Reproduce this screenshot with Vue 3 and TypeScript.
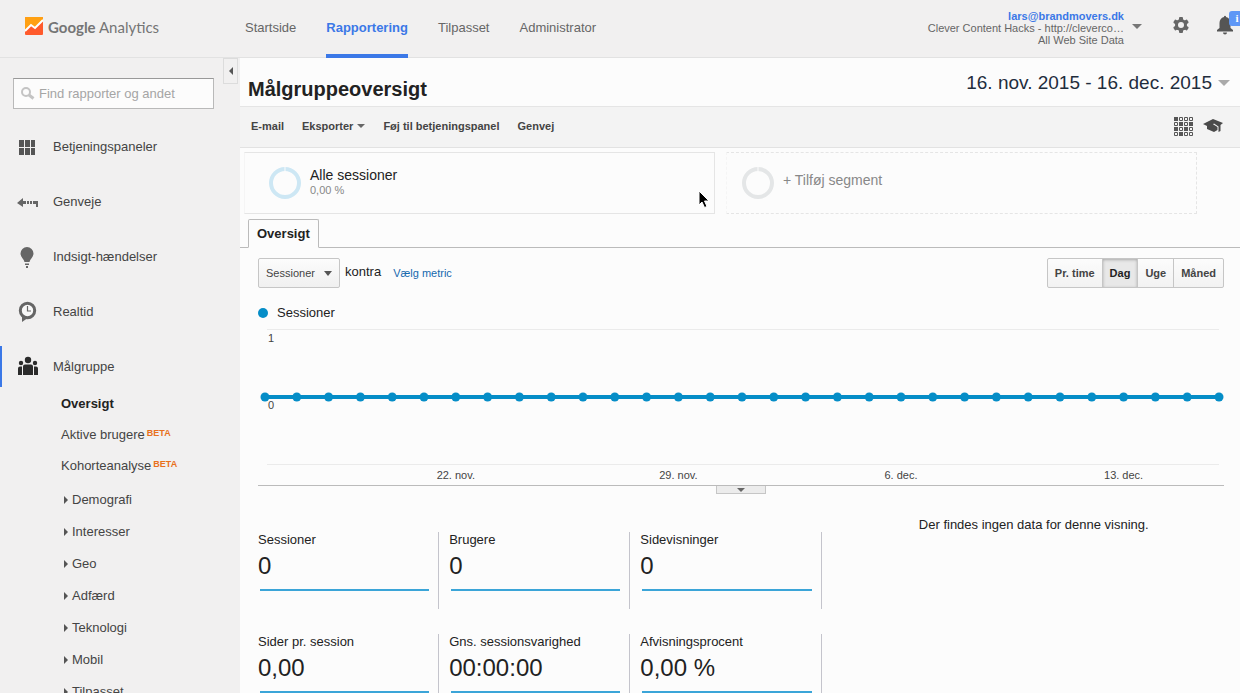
<script setup lang="ts">
import { ref } from 'vue'

interface Metric {
  label: string
  value: string
}

const tabs: string[] = ['Startside', 'Rapportering', 'Tilpasset', 'Administrator']
const activeTab = ref('Rapportering')

const periods: string[] = ['Pr. time', 'Dag', 'Uge', 'Måned']
const period = ref('Dag')

const groups: string[] = ['Demografi', 'Interesser', 'Geo', 'Adfærd', 'Teknologi', 'Mobil', 'Tilpasset']

const metrics: Metric[] = [
  { label: 'Sessioner', value: '0' },
  { label: 'Brugere', value: '0' },
  { label: 'Sidevisninger', value: '0' },
  { label: 'Sider pr. session', value: '0,00' },
  { label: 'Gns. sessionsvarighed', value: '00:00:00' },
  { label: 'Afvisningsprocent', value: '0,00 %' },
]

const days = 30
const points = Array.from({ length: days + 1 }, (_, i) => `${(i / days) * 100}%`)
const dates = [
  { day: 6, text: '22. nov.' },
  { day: 13, text: '29. nov.' },
  { day: 20, text: '6. dec.' },
  { day: 27, text: '13. dec.' },
].map((d) => ({ x: `${(d.day / days) * 100}%`, text: d.text }))

const query = ref('')
const metric = ref('Sessioner')
</script>

<template>
  <div class="page">
    <header class="top">
      <a class="logo" href="#">
        <svg width="18" height="18" viewBox="0 0 18 18" aria-hidden="true">
          <rect width="18" height="18" rx="1" fill="#ff5a2c" />
          <path d="M1 0H17Q18 0 18 1V4L11 11L7 8L0 14V1Q0 0 1 0Z" fill="#ffa012" />
          <path d="M0 14L6 8L10 11L18 3" fill="none" stroke="#fff" stroke-width="2" />
        </svg>
        <span class="brand"><b>Google</b> Analytics</span>
      </a>
      <nav class="tabs">
        <a v-for="t in tabs" :key="t" href="#" :class="{ active: t === activeTab }" @click.prevent="activeTab = t">{{ t }}</a>
      </nav>
      <div class="tools">
        <button class="account" type="button">
          <span class="who">
            <strong>lars@brandmovers.dk</strong>
            <span>Clever Content Hacks - http://cleverco…</span>
            <span>All Web Site Data</span>
          </span>
          <svg width="10" height="6" viewBox="0 0 10 6" aria-hidden="true"><path d="M0 0H10L5 5Z" fill="#777" /></svg>
        </button>
        <button class="icon gear" type="button" aria-label="Indstillinger">
          <svg width="16" height="16" viewBox="0 0 16 16">
            <g fill="#666">
              <rect x="6" y="0" width="4" height="16" rx="1" />
              <rect x="6" y="0" width="4" height="16" rx="1" transform="rotate(60 8 8)" />
              <rect x="6" y="0" width="4" height="16" rx="1" transform="rotate(120 8 8)" />
              <circle cx="8" cy="8" r="6" />
            </g>
            <circle cx="8" cy="8" r="3" fill="#f1f0f0" />
          </svg>
        </button>
        <button class="icon bell" type="button" aria-label="Meddelelser">
          <svg width="18" height="20" viewBox="0 0 18 20">
            <path d="M8 2V1.500Q9 0 10 1.500V2C13 2.800 14.500 5 14.500 8V13L17 15V16.500H1V15L3.500 13V8C3.500 5 5 2.800 8 2ZM7 17.500H11A2 2 0 0 1 7 17.500Z" fill="#555" />
          </svg>
          <span class="badge">i</span>
        </button>
      </div>
    </header>

    <div class="body">
      <aside class="side">
        <button class="collapse" type="button" aria-label="Skjul menu">
          <svg width="4" height="8" viewBox="0 0 4 8"><path d="M4 0V8L0 4Z" fill="#555" /></svg>
        </button>
        <label class="search">
          <svg width="14" height="14" viewBox="0 0 14 14" aria-hidden="true">
            <circle cx="5" cy="5" r="4" fill="none" stroke="#c4c4c4" stroke-width="2" />
            <path d="M8 8L12.500 11.500" stroke="#c4c4c4" stroke-width="3" />
          </svg>
          <input v-model="query" type="text" placeholder="Find rapporter og andet" aria-label="Find rapporter og andet" />
        </label>

        <nav class="menu">
          <a href="#">
            <svg width="22" height="22" viewBox="0 0 22 22">
              <path d="M2 4h5v7H2zM8 4h5v7H8zM14 4h4v7h-4zM2 12h5v7H2zM8 12h5v7H8zM14 12h4v7h-4z" fill="#555" />
            </svg>
            Betjeningspaneler
          </a>
          <a href="#">
            <svg width="22" height="22" viewBox="0 0 22 22">
              <path d="M0 12L6 7V10H9V13H6V16ZM10 10h2v3h-2zM13 10h2v3h-2zM16 10H21V16H19V13H16Z" fill="#666" />
            </svg>
            Genveje
          </a>
          <a href="#">
            <svg width="22" height="22" viewBox="0 0 22 22">
              <path d="M10 1A6.500 6.500 0 0 1 16.500 7.500C16.500 11 13 13 12.500 16H7.500C7 13 3.500 11 3.500 7.500A6.500 6.500 0 0 1 10 1ZM8 17.500H12V19H8ZM9 20h2v2H9z" fill="#666" />
            </svg>
            Indsigt-hændelser
          </a>
          <a href="#">
            <svg width="22" height="22" viewBox="0 0 22 22">
              <circle cx="10.500" cy="9.500" r="7.200" fill="#f8f8f8" stroke="#666" stroke-width="3" />
              <path d="M5 15V21L10 17.500Z" fill="#666" />
              <path d="M10.500 5V10H14" fill="none" stroke="#666" stroke-width="1.200" />
            </svg>
            Realtid
          </a>
          <a href="#" class="current">
            <svg width="22" height="22" viewBox="0 0 22 22">
              <g fill="#2b2b2b">
                <circle cx="11" cy="4" r="3.200" />
                <circle cx="4" cy="7" r="2.200" />
                <circle cx="18" cy="7" r="2.200" />
                <path d="M6 19V10.500Q6 8.500 8 8.500H14Q16 8.500 16 10.500V19ZM1 19V12.500Q1 10.500 3 10.500H5V19ZM17 10.500H19Q21 10.500 21 12.500V19H17Z" />
              </g>
            </svg>
            Målgruppe
          </a>
        </nav>

        <ul class="sub">
          <li><a href="#" class="bold">Oversigt</a></li>
          <li><a href="#">Aktive brugere</a><span class="beta">BETA</span></li>
          <li><a href="#">Kohorteanalyse</a><span class="beta">BETA</span></li>
        </ul>
        <ul class="sub groups">
          <li v-for="g in groups" :key="g">
            <svg width="4" height="8" viewBox="0 0 4 8" aria-hidden="true"><path d="M0 0V8L4 4Z" fill="#555" /></svg>
            <a href="#">{{ g }}</a>
          </li>
        </ul>
      </aside>

      <main class="main">
        <div class="head">
          <h1>Målgruppeoversigt</h1>
          <button class="range" type="button">
            16. nov. 2015 - 16. dec. 2015
            <svg width="12" height="6" viewBox="0 0 12 6" aria-hidden="true"><path d="M0 0H12L6 6Z" fill="#aaa" /></svg>
          </button>
        </div>

        <div class="bar">
          <button type="button">E-mail</button>
          <button type="button">Eksporter <svg width="8" height="4" viewBox="0 0 8 4" aria-hidden="true"><path d="M0 0H8L4 4Z" fill="#666" /></svg></button>
          <button type="button">Føj til betjeningspanel</button>
          <button type="button">Genvej</button>
          <div class="right">
            <button type="button" aria-label="Datatabel">
              <svg width="19" height="19" viewBox="0 0 19 19">
                <path d="M0 0h4v4H0zM5 5h4v4H5zM0 10h4v4H0zM10 10h4v4h-4zM5 15h4v4H5zM15 5h4v4h-4z" fill="#555" />
                <path d="M5.500 .5h3v3h-3zM10.500 .5h3v3h-3zM15.500 .5h3v3h-3zM.5 5.500h3v3h-3zM10.500 5.500h3v3h-3zM5.500 10.500h3v3h-3zM15.500 10.500h3v3h-3zM.5 15.500h3v3h-3zM10.500 15.500h3v3h-3zM15.500 15.500h3v3h-3z" fill="none" stroke="#555" />
              </svg>
            </button>
            <button type="button" aria-label="Hjælp">
              <svg width="21" height="14" viewBox="0 0 21 14">
                <path d="M0 5L10 0L20 4L17.500 6V12L15.500 13V7.500L11 4.500L10 5.200L14.500 8V11L11 13L4 10V7Z" fill="#4a4a4a" />
              </svg>
            </button>
          </div>
        </div>

        <div class="segments">
          <button class="segment" type="button">
            <svg width="32" height="32" viewBox="0 0 32 32" aria-hidden="true"><circle cx="16" cy="16" r="14" fill="none" stroke="#cde7f4" stroke-width="4" /><path d="M16 0V4" stroke="#fcfcfc" /></svg>
            <span><span class="name">Alle sessioner</span><small>0,00 %</small></span>
          </button>
          <button class="segment add" type="button">
            <svg width="32" height="32" viewBox="0 0 32 32" aria-hidden="true"><circle cx="16" cy="16" r="14" fill="none" stroke="#e4e6e7" stroke-width="4" /><path d="M16 0V4" stroke="#fcfcfc" /></svg>
            <span class="name">+ Tilføj segment</span>
          </button>
        </div>

        <div class="views"><button type="button">Oversigt</button></div>

        <section class="report">
          <div class="controls">
            <span class="pick">
              <select v-model="metric" aria-label="Metric">
                <option>Sessioner</option>
                <option>Brugere</option>
              </select>
              <svg width="8" height="5" viewBox="0 0 8 5" aria-hidden="true"><path d="M0 0H8L4 5Z" fill="#555" /></svg>
            </span>
            <span class="versus">kontra</span>
            <a href="#">Vælg metric</a>
            <div class="periods" role="group" aria-label="Periode">
              <button v-for="p in periods" :key="p" type="button" :class="{ on: p === period }" @click="period = p">{{ p }}</button>
            </div>
          </div>

          <div class="legend"><i></i>Sessioner</div>

          <div class="chart">
            <svg width="100%" height="156" role="img" aria-label="Sessioner">
              <line x1="2" x2="100%" y1="1.500" y2="1.500" stroke="#ebebeb" />
              <line x1="2" x2="100%" y1="136.500" y2="136.500" stroke="#ebebeb" />
              <text x="3" y="14">1</text>
              <text x="3" y="81">0</text>
              <line x1="0" x2="100%" y1="69" y2="69" stroke="#058dc7" stroke-width="4" />
              <circle v-for="x in points" :key="x" :cx="x" cy="69" r="4.500" fill="#058dc7" />
              <text v-for="d in dates" :key="d.text" :x="d.x" y="151" text-anchor="middle">{{ d.text }}</text>
            </svg>
          </div>
          <div class="fold">
            <button type="button" aria-label="Vis mere">
              <svg width="8" height="4" viewBox="0 0 8 4"><path d="M0 0H8L4 4Z" fill="#666" /></svg>
            </button>
          </div>

          <div class="summary">
            <div class="metrics">
              <div v-for="m in metrics" :key="m.label" class="metric">
                <span>{{ m.label }}</span>
                <strong>{{ m.value }}</strong>
                <i></i>
              </div>
            </div>
            <p class="empty">Der findes ingen data for denne visning.</p>
          </div>
        </section>
      </main>
    </div>

    <svg class="pointer" width="12" height="19" viewBox="0 0 12 19" aria-hidden="true">
      <path d="M1 1V15L4 12L6.500 17.500L9 16.500L6.500 11H11Z" fill="#000" stroke="#fff" />
    </svg>
  </div>
</template>

<style>
body {
  background: #fcfcfc;
}
</style>

<style scoped>
* {
  box-sizing: border-box;
}
.page {
  position: relative;
  display: flex;
  flex-direction: column;
  height: 100vh;
  overflow: hidden;
  font: 13px/16px "Liberation Sans", Arial, sans-serif;
  color: #222;
}
button {
  padding: 0;
  border: 0;
  background: none;
  font: inherit;
  color: inherit;
  cursor: pointer;
}
a {
  color: inherit;
  text-decoration: none;
}
svg {
  flex: none;
}
.top {
  flex: none;
  display: flex;
  height: 58px;
  background: #f1f0f0;
  border-bottom: 1px solid #e2e2e2;
}
.logo {
  display: flex;
  gap: 5px;
  width: 245px;
  padding: 17px 0 0 25px;
}
.brand {
  font: 15px/20px Lato, sans-serif;
  color: #757575;
}
.brand b {
  font-weight: bold;
}
.tabs {
  display: flex;
  gap: 30px;
  color: #666;
}
.tabs a {
  height: 58px;
  padding-top: 20px;
}
.tabs .active {
  color: #3b78e7;
  font-weight: bold;
  border-bottom: 4px solid #3b78e7;
}
.tools {
  display: flex;
  align-items: flex-start;
  margin-left: auto;
}
.account {
  display: flex;
  gap: 8px;
  padding-top: 10px;
  font-size: 11px;
  line-height: 12px;
  color: #666;
  text-align: right;
}
.who {
  display: flex;
  flex-direction: column;
}
.who strong {
  color: #3b78e7;
}
.account svg {
  margin-top: 14px;
}
.icon {
  position: relative;
  display: flex;
}
.gear {
  margin: 17px 0 0 31px;
}
.bell {
  margin: 15px 6px 0 27px;
}
.badge {
  position: absolute;
  left: 13px;
  top: -4px;
  width: 16px;
  border-radius: 3px;
  background: #5e97f6;
  color: #fff;
  font: bold 11px/15px "Liberation Serif", serif;
}
.body {
  flex: 1;
  display: flex;
  min-height: 0;
}
.side {
  position: relative;
  flex: none;
  width: 240px;
  background: #f1f0f0;
  color: #444;
}
.collapse {
  position: absolute;
  right: 2px;
  top: 0;
  display: grid;
  place-items: center;
  width: 15px;
  height: 26px;
  border: 1px solid #dcdcdc;
}
.search {
  display: flex;
  align-items: center;
  gap: 4px;
  height: 31px;
  margin: 20px 26px 0 13px;
  padding: 0 7px;
  background: #fcfcfc;
  border: 1px solid #b9b9b9;
  border-top-color: #999;
}
.search input {
  flex: 1;
  min-width: 0;
  padding: 0;
  border: 0;
  outline: 0;
  background: none;
  font: inherit;
}
.search input::placeholder {
  color: #a5a5a5;
  opacity: 1;
}
.menu {
  padding-top: 17px;
}
.menu a {
  display: flex;
  align-items: center;
  gap: 14px;
  height: 41px;
  margin-bottom: 14px;
  padding-left: 17px;
}
.menu .current {
  margin-bottom: 9px;
  padding-left: 15px;
  border-left: 2px solid #3b78e7;
}
ul {
  margin: 0;
  padding: 0;
  list-style: none;
}
.sub li {
  display: flex;
  height: 31px;
  padding-left: 61px;
}
.sub .bold {
  font-weight: bold;
  color: #222;
}
.sub .beta {
  margin-left: 2px;
  font-size: 9px;
  line-height: 12px;
  font-weight: bold;
  color: #e8711c;
}
.sub.groups {
  padding-top: 3px;
}
.groups li {
  gap: 4px;
  height: 32px;
  padding-left: 64px;
}
.groups svg {
  margin-top: 4px;
}
.main {
  flex: 1;
  min-width: 0;
}
.head {
  display: flex;
  justify-content: space-between;
  height: 49px;
  padding: 12px 10px 0 8px;
  border-bottom: 1px solid #e5e5e5;
}
h1 {
  margin: 0;
  padding-top: 7px;
  font-size: 20px;
  line-height: 24px;
}
.range {
  display: flex;
  align-items: center;
  align-self: flex-start;
  gap: 6px;
  font-size: 19px;
  line-height: 26px;
  color: #1f2d3d;
}
.bar {
  display: flex;
  align-items: center;
  gap: 18px;
  height: 41px;
  padding: 0 16px 2px 11px;
  background: #f3f3f3;
  border-bottom: 1px solid #e2e2e2;
  font-size: 11px;
  font-weight: bold;
  color: #444;
}
.bar button {
  display: flex;
  align-items: center;
  gap: 4px;
}
.right {
  display: flex;
  gap: 10px;
  margin-left: auto;
}
.segments {
  display: grid;
  grid-template-columns: 1fr 1fr;
  gap: 11px;
  margin: 4px 43px 5px 4px;
}
.segment {
  display: flex;
  gap: 9px;
  height: 62px;
  padding: 14px 24px;
  border: 1px solid #e5e5e5;
  border-left-color: #f5f5f5;
  text-align: left;
}
.segment.add {
  padding-left: 15px;
  border-style: dashed;
  color: #888;
}
.segment .name {
  display: block;
  font-size: 14px;
  line-height: 16px;
}
.add .name {
  padding-top: 5px;
}
.segment small {
  display: block;
  font-size: 11px;
  line-height: 14px;
  color: #888;
}
.views {
  display: flex;
  padding-left: 8px;
  border-bottom: 1px solid #bbb;
}
.views button {
  height: 29px;
  margin-bottom: -1px;
  padding: 0 8px;
  border: 1px solid #bbb;
  border-bottom-color: #fcfcfc;
  border-radius: 2px 2px 0 0;
  background: #fcfcfc;
  font-weight: bold;
}
.report {
  padding: 10px 16px 0 18px;
}
.controls {
  display: flex;
  height: 30px;
}
.pick {
  position: relative;
  width: 82px;
}
.pick select {
  appearance: none;
  width: 100%;
  height: 30px;
  padding: 0 7px;
  border: 1px solid #c6c6c6;
  border-radius: 2px;
  background: linear-gradient(#fcfcfc, #f0f0f0);
  font: 11px "Liberation Sans", Arial, sans-serif;
  color: #444;
}
.pick svg {
  position: absolute;
  right: 8px;
  top: 13px;
  pointer-events: none;
}
.versus {
  padding: 6px 12px 0 5px;
}
.controls a {
  padding-top: 7px;
  font-size: 11px;
  color: #1569ae;
}
.periods {
  display: flex;
  margin-left: auto;
  border: 1px solid #c6c6c6;
  border-radius: 2px;
  background: linear-gradient(#fcfcfc, #f2f2f2);
}
.periods button {
  padding: 0 7px;
  font-size: 11px;
  font-weight: bold;
  color: #444;
}
.periods button + button {
  border-left: 1px solid #c6c6c6;
}
.periods .on {
  background: #e8e8e8;
  box-shadow: inset 0 1px 3px #aaa;
  color: #222;
}
.legend {
  display: flex;
  align-items: center;
  gap: 9px;
  padding: 17px 0 7px;
}
.legend i {
  width: 10px;
  height: 10px;
  border-radius: 50%;
  background: #058dc7;
}
.chart {
  height: 158px;
  padding: 0 5px 0 7px;
  border-bottom: 1px solid #bbb;
}
.chart svg {
  display: block;
  overflow: visible;
}
.chart text {
  font-size: 11px;
  fill: #444;
}
.fold {
  display: flex;
  justify-content: center;
  height: 46px;
}
.fold button {
  display: grid;
  place-items: center;
  width: 50px;
  height: 8px;
  border: 1px solid #c6c6c6;
  border-top: 0;
  background: #ececec;
}
.summary {
  display: grid;
  grid-template-columns: 7fr 5fr;
}
.metrics {
  display: grid;
  grid-template-columns: repeat(3, 1fr);
  column-gap: 10px;
  row-gap: 25px;
}
.metric {
  display: flex;
  flex-direction: column;
  height: 77px;
  padding-right: 9px;
  border-right: 1px solid #c4c4cc;
}
.metric strong {
  margin-top: 6px;
  font-size: 24px;
  line-height: 24px;
  font-weight: normal;
}
.metric i {
  height: 2px;
  margin: 11px 0 0 2px;
  background: #3ba5d8;
}
.empty {
  margin: -15px 0 0;
  padding-left: 22px;
  text-align: center;
}
.pointer {
  position: absolute;
  left: 698px;
  top: 190px;
}
</style>
